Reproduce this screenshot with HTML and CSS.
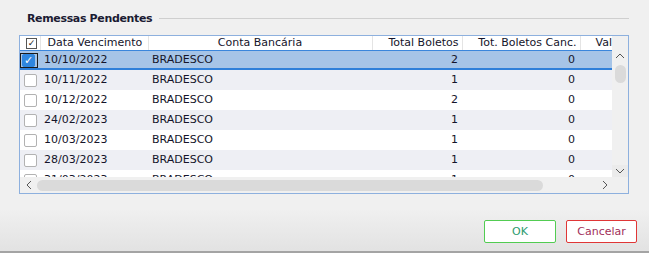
FILE: index.html
```html
<!DOCTYPE html>
<html lang="pt">
<head>
  <meta charset="UTF-8">
  <title>Remessas Pendentes</title>
  <link rel="stylesheet" href="styles.css">
</head>
<body>
  <div class="group">
    <div class="group-title">
      <span>Remessas Pendentes</span>
      <div class="rule"></div>
    </div>

    <div class="grid-box">
      <div class="grid-view">
        <table class="grid">
          <colgroup>
            <col class="c-check">
            <col class="c-date">
            <col class="c-bank">
            <col class="c-total">
            <col class="c-canc">
            <col class="c-val">
          </colgroup>
          <thead>
            <tr>
              <th class="chk"><span class="hcheck">&#10003;</span></th>
              <th class="left">Data Vencimento</th>
              <th class="center">Conta Bancária</th>
              <th class="right">Total Boletos</th>
              <th class="right">Tot. Boletos Canc.</th>
              <th class="val">Val</th>
            </tr>
          </thead>
          <tbody>
            <tr class="selected">
              <td class="chk"><span class="focus"><span class="check on">&#10003;</span></span></td>
              <td>10/10/2022</td>
              <td>BRADESCO</td>
              <td class="num">2</td>
              <td class="num">0</td>
              <td></td>
            </tr>
            <tr class="alt">
              <td class="chk"><span class="check"></span></td>
              <td>10/11/2022</td>
              <td>BRADESCO</td>
              <td class="num">1</td>
              <td class="num">0</td>
              <td></td>
            </tr>
            <tr>
              <td class="chk"><span class="check"></span></td>
              <td>10/12/2022</td>
              <td>BRADESCO</td>
              <td class="num">2</td>
              <td class="num">0</td>
              <td></td>
            </tr>
            <tr class="alt">
              <td class="chk"><span class="check"></span></td>
              <td>24/02/2023</td>
              <td>BRADESCO</td>
              <td class="num">1</td>
              <td class="num">0</td>
              <td></td>
            </tr>
            <tr>
              <td class="chk"><span class="check"></span></td>
              <td>10/03/2023</td>
              <td>BRADESCO</td>
              <td class="num">1</td>
              <td class="num">0</td>
              <td></td>
            </tr>
            <tr class="alt">
              <td class="chk"><span class="check"></span></td>
              <td>28/03/2023</td>
              <td>BRADESCO</td>
              <td class="num">1</td>
              <td class="num">0</td>
              <td></td>
            </tr>
            <tr>
              <td class="chk"><span class="check"></span></td>
              <td>31/03/2023</td>
              <td>BRADESCO</td>
              <td class="num">1</td>
              <td class="num">0</td>
              <td></td>
            </tr>
          </tbody>
        </table>
      </div>

      <div class="vscroll">
        <svg class="arrow" width="10" height="6" viewBox="0 0 10 6"><path d="M1 5 L5 1 L9 5" fill="none" stroke="#555" stroke-width="1"/></svg>
        <div class="vthumb"></div>
        <div class="vspace"></div>
        <div class="vdown">
          <svg class="arrow" width="10" height="6" viewBox="0 0 10 6"><path d="M1 1 L5 5 L9 1" fill="none" stroke="#555" stroke-width="1"/></svg>
        </div>
      </div>

      <div class="hscroll">
        <svg class="arrow" width="6" height="10" viewBox="0 0 6 10"><path d="M5 1 L1 5 L5 9" fill="none" stroke="#555" stroke-width="1"/></svg>
        <div class="hthumb"></div>
        <svg class="arrow" width="6" height="10" viewBox="0 0 6 10"><path d="M1 1 L5 5 L1 9" fill="none" stroke="#555" stroke-width="1"/></svg>
      </div>
      <div class="corner"></div>
    </div>
  </div>

  <div class="footer">
    <button class="btn ok">OK</button>
    <button class="btn cancel">Cancelar</button>
  </div>
</body>
</html>
```

FILE: styles.css
```css
body {
  margin: 0;
  width: 649px;
  height: 253px;
  background-color: #f0f0f0;
  font-family: "DejaVu Sans", Verdana, sans-serif;
  font-size: 11px;
  color: #14142a;
  overflow: hidden;
  display: flex;
  flex-direction: column;
}

.group {
  padding: 11px 0 0 19px;
}

.group-title {
  display: flex;
  align-items: center;
  height: 14px;
  padding-left: 8px;
  margin-bottom: 10px;
}

.group-title span {
  font-weight: bold;
  letter-spacing: -0.35px;
  color: #1b1b33;
  white-space: nowrap;
}

.rule {
  flex: 1;
  height: 1px;
  margin: 0 20px 0 7px;
  background-color: #cfcfcf;
}

.grid-box {
  width: 608px;
  height: 157px;
  border: 1px solid #8db0de;
  display: grid;
  grid-template-columns: 592px 16px;
  grid-template-rows: 141px 16px;
}

.grid-view {
  overflow: hidden;
  background-color: #fff;
}

.grid {
  table-layout: fixed;
  border-collapse: collapse;
  width: 640px;
}

.c-check { width: 20px; }
.c-date { width: 108px; }
.c-bank { width: 224px; }
.c-total { width: 90px; }
.c-canc { width: 118px; }
.c-val { width: 80px; }

.grid th {
  height: 14px;
  padding: 0 3px;
  font-weight: normal;
  line-height: 14px;
  white-space: nowrap;
  border-right: 1px solid #e4e4e4;
  background-color: #fff;
}

.grid th.left { text-align: left; padding-left: 7px; }
.grid th.center { text-align: center; }
.grid th.right { text-align: right; }
.grid th.val { text-align: left; padding-left: 15px; }

.grid td {
  height: 20px;
  padding: 0 4px;
  line-height: 20px;
  white-space: nowrap;
}

.grid td.num {
  text-align: right;
  padding-right: 4px;
}

.grid td:nth-child(5) {
  padding-right: 5px;
}

.grid tr.alt td {
  background-color: #eeeff4;
}

.grid tr.selected td {
  background-color: #a6c4e7;
  box-shadow: inset 0 1px 0 #3a86dc, inset 0 -2px 0 #2f7fd9;
}

.grid .chk {
  padding: 0;
  text-align: left;
}

.hcheck {
  display: flex;
  align-items: center;
  justify-content: center;
  width: 9px;
  height: 9px;
  margin-left: 6px;
  border: 1px solid #555;
  font-size: 9px;
  line-height: 9px;
  color: #222;
}

.check {
  display: block;
  box-sizing: border-box;
  width: 13px;
  height: 13px;
  margin-left: 4px;
  border: 1px solid #b2b2b2;
  border-radius: 2px;
  background-color: #fff;
  color: #fff;
  font-size: 11px;
  line-height: 12px;
  text-align: center;
}

.check.on {
  margin: 0;
  border-color: #2f86df;
  background-color: #2f86df;
  font-weight: bold;
}

.focus {
  display: block;
  width: 15px;
  height: 13px;
  padding: 0 0 0 1px;
  border: 1px solid #1a1a1a;
}

.vscroll {
  display: flex;
  flex-direction: column;
  align-items: center;
  background-color: #f0f0f0;
  padding-top: 17px;
}

.vthumb {
  width: 11px;
  height: 18px;
  margin-top: 6px;
  border-radius: 6px;
  background-color: #dadada;
}

.vspace {
  flex: 1;
}

.vdown {
  width: 16px;
  height: 12px;
  display: flex;
  align-items: center;
  justify-content: center;
  background-color: #ebebeb;
}

.hscroll {
  display: flex;
  align-items: center;
  gap: 5px;
  padding: 0 4px 0 6px;
  background-color: #f0f0f0;
}

.hthumb {
  width: 508px;
  height: 11px;
  border-radius: 6px;
  background-color: #dadada;
  margin-right: 54px;
}

.corner {
  background-color: #f0f0f0;
}

.footer {
  flex: 1;
  display: flex;
  justify-content: flex-end;
  align-items: flex-start;
  gap: 10px;
  padding: 26px 12px 0 0;
  background: linear-gradient(#f0f0f0 0, #f0f0f0 15px, #e3e3e3 55px);
  border-bottom: 2px solid #a4a4a4;
}

.btn {
  width: 72px;
  height: 23px;
  padding: 0;
  background-color: #fff;
  border-radius: 2px;
  font-family: "DejaVu Sans", Verdana, sans-serif;
  font-size: 11px;
  cursor: pointer;
}

.btn.ok {
  border: 1px solid #52cc52;
  color: #2d9b6e;
}

.btn.cancel {
  width: 71px;
  border: 1px solid #e03636;
  color: #a2305a;
}
```
